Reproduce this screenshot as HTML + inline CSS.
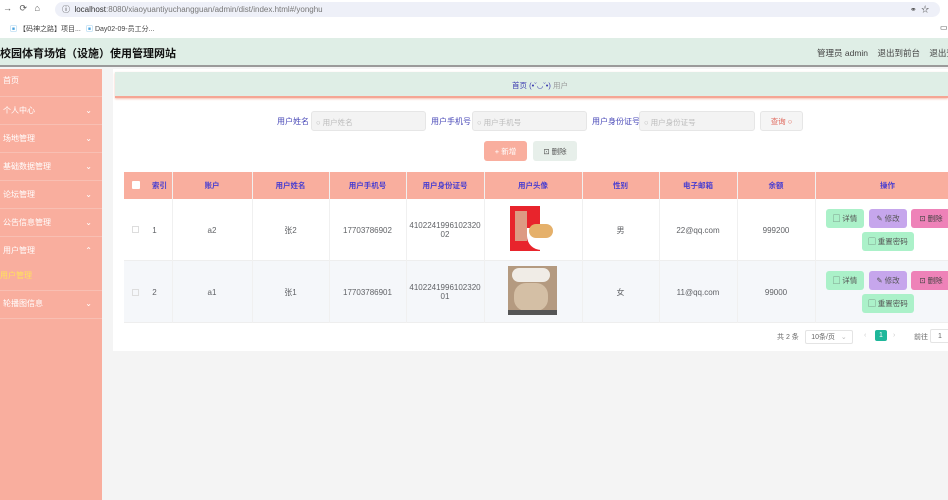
<!DOCTYPE html>
<html><head><meta charset="utf-8"><style>
*{box-sizing:border-box;margin:0;padding:0}
body{width:948px;height:500px;overflow:hidden;background:#f4f4f4;font-family:"Liberation Sans","Noto Sans CJK SC",sans-serif;font-size:8px;color:#606266;position:relative}
.a{position:absolute;white-space:nowrap}
.cell{position:absolute;display:flex;align-items:center;justify-content:center;text-align:center}
.b{position:absolute;display:flex;align-items:center;justify-content:center;white-space:nowrap;border-radius:3px;font-size:7.5px}
</style></head><body>
<!-- browser bar -->
<div class="a" style="left:0;top:0;width:948px;height:18px;background:#fff"></div>
<div class="a" style="left:55px;top:2px;width:885px;height:15px;background:#eef0f8;border-radius:8px"></div>
<div class="a" style="left:3px;top:3px;font-size:9px;color:#555">→ &nbsp; ⟳ &nbsp; ⌂</div>
<div class="a" style="left:62px;top:4px;font-size:8px;color:#333">ⓘ &nbsp;localhost<span style="color:#777">:8080/xiaoyuantiyuchangguan/admin/dist/index.html#/yonghu</span></div>
<div class="a" style="left:910px;top:4px;font-size:8px;color:#444">⚭ &nbsp;☆</div>
<div class="a" style="left:0;top:18px;width:948px;height:20px;background:#fff"></div>
<div class="a" style="left:10px;top:24px;font-size:7px;color:#444"><span style="color:#4aa3df">▣</span> 【码神之路】项目...</div>
<div class="a" style="left:86px;top:24px;font-size:7px;color:#444"><span style="color:#4aa3df">▣</span> Day02-09-员工分...</div>
<div class="a" style="left:940px;top:23px;font-size:8px;color:#444">▭</div>
<!-- header -->
<div class="a" style="left:0;top:38px;width:948px;height:29px;background:#dfeee6;border-bottom:2px solid #9a9a9a"></div>
<div class="a" style="left:0;top:45px;font-size:11px;font-weight:bold;color:#111">校园体育场馆（设施）使用管理网站</div>
<div class="a" style="left:817px;top:47px;font-size:8.5px;color:#444">管理员 admin &nbsp;&nbsp; 退出到前台 &nbsp;&nbsp; 退出登录</div>
<!-- sidebar -->
<div class="a" style="left:0;top:69px;width:102px;height:431px;background:#f9ae9e"></div>
<div class="a" style="left:0;top:69px;width:102px;color:#fff;font-size:8px">
<div style="height:28px;line-height:24px;padding-left:3px;border-bottom:1px solid #f8bfb3">首页</div>
<div style="height:28px;line-height:28px;padding-left:3px;border-bottom:1px solid #f8bfb3">个人中心<span style="float:right;margin-right:10px">⌄</span></div>
<div style="height:28px;line-height:28px;padding-left:3px;border-bottom:1px solid #f8bfb3">场地管理<span style="float:right;margin-right:10px">⌄</span></div>
<div style="height:28px;line-height:28px;padding-left:3px;border-bottom:1px solid #f8bfb3">基础数据管理<span style="float:right;margin-right:10px">⌄</span></div>
<div style="height:28px;line-height:28px;padding-left:3px;border-bottom:1px solid #f8bfb3">论坛管理<span style="float:right;margin-right:10px">⌄</span></div>
<div style="height:28px;line-height:28px;padding-left:3px;border-bottom:1px solid #f8bfb3">公告信息管理<span style="float:right;margin-right:10px">⌄</span></div>
<div style="height:28px;line-height:28px;padding-left:3px">用户管理<span style="float:right;margin-right:10px">⌃</span></div>
<div style="height:26px;line-height:22px;padding-left:0;color:#ffe35a;border-bottom:1px solid #f8bfb3">用户管理</div>
<div style="height:28px;line-height:26px;padding-left:3px;border-bottom:1px solid #f8bfb3">轮播图信息<span style="float:right;margin-right:10px">⌄</span></div>
</div>
<!-- main -->
<div class="a" style="left:113px;top:69px;width:835px;height:282px;background:#fff"></div>
<div class="a" style="left:115px;top:72px;width:833px;height:26px;background:#dfeee6;border-bottom:2px solid #f5a594;box-shadow:0 1px 2px #f5c0b0"></div>
<div class="a" style="left:512px;top:80px;font-size:7.5px;color:#3b3bb0">首页 (•ˇ◡ˇ•) <span style="color:#999">用户</span></div>
<!-- search -->
<div class="a" style="left:277px;top:116px;font-size:8px;color:#4a4ab8">用户姓名</div>
<div class="a" style="left:311px;top:111px;width:115px;height:20px;background:#f3f3f3;border:1px solid #e6e6e6;border-radius:3px;padding:5px 4px;color:#bbb;font-size:7.5px">○ 用户姓名</div>
<div class="a" style="left:431px;top:116px;font-size:8px;color:#4a4ab8">用户手机号</div>
<div class="a" style="left:472px;top:111px;width:115px;height:20px;background:#f3f3f3;border:1px solid #e6e6e6;border-radius:3px;padding:5px 4px;color:#bbb;font-size:7.5px">○ 用户手机号</div>
<div class="a" style="left:592px;top:116px;font-size:8px;color:#4a4ab8">用户身份证号</div>
<div class="a" style="left:639px;top:111px;width:116px;height:20px;background:#f3f3f3;border:1px solid #e6e6e6;border-radius:3px;padding:5px 4px;color:#bbb;font-size:7.5px">○ 用户身份证号</div>
<div class="b" style="left:760px;top:111px;width:43px;height:20px;background:#f5f5f5;border:1px solid #e6e6e6;color:#e0665a">查询 ○</div>
<div class="b" style="left:484px;top:141px;width:43px;height:20px;background:#f9ae9e;color:#fff">+ 新增</div>
<div class="b" style="left:533px;top:141px;width:44px;height:20px;background:#e7efea;color:#555">⊡ 删除</div>
<!-- table -->
<div class="a" style="left:124px;top:172px;width:824px;height:27px;background:#f9ae9e"></div>
<div class="a" style="left:124px;top:199px;width:824px;height:62px;background:#fff;border-bottom:1px solid #eee"></div>
<div class="a" style="left:124px;top:261px;width:824px;height:62px;background:#f5f7fa;border-bottom:1px solid #eee"></div>
<div class="a" style="left:132px;top:181px;width:8px;height:8px;background:#fff;border-radius:1px"></div>
<div class="a" style="left:132px;top:226px;width:7px;height:7px;border:1px solid #ddd"></div>
<div class="a" style="left:132px;top:289px;width:7px;height:7px;border:1px solid #ddd"></div>
<div style="color:#4a3fd0;font-weight:bold;font-size:7.5px">
<div class="cell" style="left:147px;top:172px;width:25px;height:27px">索引</div>
<div class="cell" style="left:172px;top:172px;width:80px;height:27px">账户</div>
<div class="cell" style="left:252px;top:172px;width:77px;height:27px">用户姓名</div>
<div class="cell" style="left:329px;top:172px;width:77px;height:27px">用户手机号</div>
<div class="cell" style="left:406px;top:172px;width:78px;height:27px">用户身份证号</div>
<div class="cell" style="left:484px;top:172px;width:98px;height:27px">用户头像</div>
<div class="cell" style="left:582px;top:172px;width:77px;height:27px">性别</div>
<div class="cell" style="left:659px;top:172px;width:78px;height:27px">电子邮箱</div>
<div class="cell" style="left:737px;top:172px;width:78px;height:27px">余额</div>
<div class="cell" style="left:815px;top:172px;width:145px;height:27px">操作</div>
</div>
<div style="font-size:8px;color:#606266">
<div class="cell" style="left:147px;top:199px;width:15px;height:62px">1</div>
<div class="cell" style="left:172px;top:199px;width:80px;height:62px">a2</div>
<div class="cell" style="left:252px;top:199px;width:77px;height:62px">张2</div>
<div class="cell" style="left:329px;top:199px;width:77px;height:62px">17703786902</div>
<div class="cell" style="left:406px;top:199px;width:78px;height:62px">4102241996102320<br>02</div>
<div class="cell" style="left:582px;top:199px;width:77px;height:62px">男</div>
<div class="cell" style="left:659px;top:199px;width:78px;height:62px">22@qq.com</div>
<div class="cell" style="left:737px;top:199px;width:78px;height:62px">999200</div>
<div class="cell" style="left:147px;top:261px;width:15px;height:62px">2</div>
<div class="cell" style="left:172px;top:261px;width:80px;height:62px">a1</div>
<div class="cell" style="left:252px;top:261px;width:77px;height:62px">张1</div>
<div class="cell" style="left:329px;top:261px;width:77px;height:62px">17703786901</div>
<div class="cell" style="left:406px;top:261px;width:78px;height:62px">4102241996102320<br>01</div>
<div class="cell" style="left:582px;top:261px;width:77px;height:62px">女</div>
<div class="cell" style="left:659px;top:261px;width:78px;height:62px">11@qq.com</div>
<div class="cell" style="left:737px;top:261px;width:78px;height:62px">99000</div>
</div>
<!-- column lines -->
<div class="a" style="left:172px;top:172px;width:1px;height:151px;background:#f0f0f0"></div>
<div class="a" style="left:252px;top:172px;width:1px;height:151px;background:#f0f0f0"></div>
<div class="a" style="left:329px;top:172px;width:1px;height:151px;background:#f0f0f0"></div>
<div class="a" style="left:406px;top:172px;width:1px;height:151px;background:#f0f0f0"></div>
<div class="a" style="left:484px;top:172px;width:1px;height:151px;background:#f0f0f0"></div>
<div class="a" style="left:582px;top:172px;width:1px;height:151px;background:#f0f0f0"></div>
<div class="a" style="left:659px;top:172px;width:1px;height:151px;background:#f0f0f0"></div>
<div class="a" style="left:737px;top:172px;width:1px;height:151px;background:#f0f0f0"></div>
<div class="a" style="left:815px;top:172px;width:1px;height:151px;background:#f0f0f0"></div>
<!-- avatars -->
<div class="a" style="left:510px;top:206px;width:30px;height:45px;background:#e8242c"></div>
<div class="a" style="left:515px;top:211px;width:12px;height:30px;background:#d9b89a;opacity:.8"></div>
<div class="a" style="left:527px;top:228px;width:28px;height:22px;background:#fff;border-radius:0 0 14px 14px"></div>
<div class="a" style="left:529px;top:224px;width:24px;height:14px;background:#e5b06a;border-radius:8px"></div>
<div class="a" style="left:508px;top:266px;width:49px;height:49px;background:#b49a80"></div>
<div class="a" style="left:512px;top:268px;width:38px;height:14px;background:#f0ece6;border-radius:8px"></div>
<div class="a" style="left:514px;top:283px;width:34px;height:28px;background:#d4bfa5;border-radius:12px"></div>
<div class="a" style="left:508px;top:310px;width:49px;height:5px;background:#555"></div>
<!-- action buttons -->
<div class="b" style="left:826px;top:209px;width:38px;height:19px;background:#abf1c9;color:#555">▢ 详情</div>
<div class="b" style="left:869px;top:209px;width:38px;height:19px;background:#c6a6ec;color:#555">✎ 修改</div>
<div class="b" style="left:911px;top:209px;width:40px;height:19px;background:#ee82b8;color:#444">⊡ 删除</div>
<div class="b" style="left:862px;top:232px;width:52px;height:19px;background:#abf1c9;color:#555">▢ 重置密码</div>
<div class="b" style="left:826px;top:271px;width:38px;height:19px;background:#abf1c9;color:#555">▢ 详情</div>
<div class="b" style="left:869px;top:271px;width:38px;height:19px;background:#c6a6ec;color:#555">✎ 修改</div>
<div class="b" style="left:911px;top:271px;width:40px;height:19px;background:#ee82b8;color:#444">⊡ 删除</div>
<div class="b" style="left:862px;top:294px;width:52px;height:19px;background:#abf1c9;color:#555">▢ 重置密码</div>
<!-- pagination -->
<div class="a" style="left:777px;top:332px;font-size:7px;color:#666">共 2 条</div>
<div class="b" style="left:805px;top:330px;width:48px;height:14px;border:1px solid #e4e4e4;border-radius:2px;font-size:7px;color:#666">10条/页 <span style="color:#bbb;margin-left:6px">⌄</span></div>
<div class="a" style="left:864px;top:332px;font-size:7px;color:#ccc">‹</div>
<div class="b" style="left:875px;top:330px;width:12px;height:11px;background:#1fb79a;color:#fff;font-size:7px;border-radius:2px">1</div>
<div class="a" style="left:893px;top:332px;font-size:7px;color:#ccc">›</div>
<div class="a" style="left:914px;top:332px;font-size:7px;color:#666">前往</div>
<div class="b" style="left:930px;top:329px;width:20px;height:14px;border:1px solid #e4e4e4;border-radius:2px;font-size:7px;color:#666">1</div>
</body></html>
